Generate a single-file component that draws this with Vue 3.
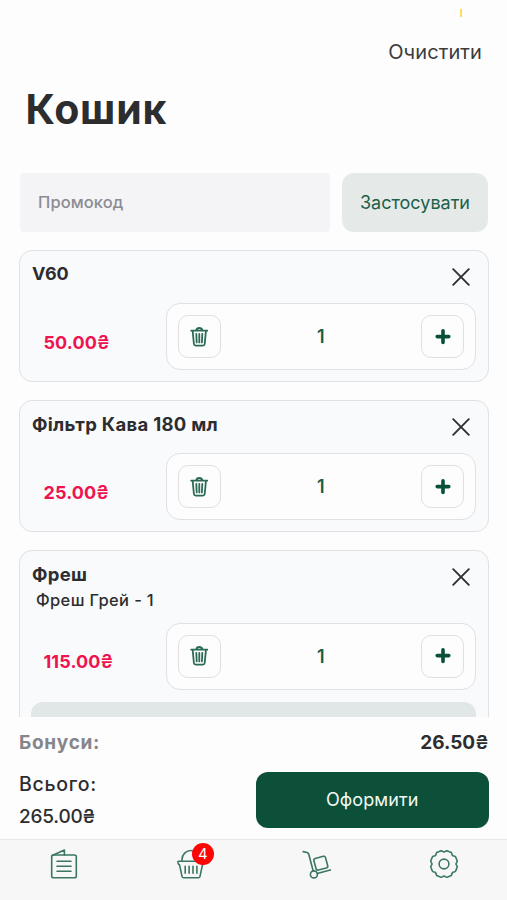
<script setup>
const items = [
  { name: 'V60', price: '50.00', qty: 1 },
  { name: 'Фільтр Кава 180 мл', price: '25.00', qty: 1 },
  { name: 'Фреш', option: 'Фреш Грей - 1', price: '115.00', qty: 1, more: true },
]

// Outline of the settings gear: a circle with eight shallow notches
const gear = (() => {
  const pts = []
  for (let d = 0; d < 360; d += 3) {
    const off = ((d + 22.5) % 45) - 22.5
    const r = 13.9 - 1.9 * Math.exp(-((off / 9) ** 2)) - 0.5 * Math.exp(-(((Math.abs(off) - 22.5) / 8) ** 2))
    const a = (d * Math.PI) / 180
    pts.push(`${(15 + r * Math.sin(a)).toFixed(2)} ${(15 - r * Math.cos(a)).toFixed(2)}`)
  }
  return `M${pts.join('L')}Z`
})()
</script>

<template>
  <div class="screen">
    <header class="top">
      <i class="mark"></i>
      <button class="clear">Очистити</button>
      <h1>Кошик</h1>
    </header>

    <div class="promo">
      <div class="promo-input"><span>Промокод</span></div>
      <button class="apply"><span>Застосувати</span></button>
    </div>

    <main class="list">
      <article v-for="item in items" :key="item.name" class="card">
        <div class="card-head">
          <div>
            <h2 :class="{ digits: item.name === 'V60' }">{{ item.name }}</h2>
            <p v-if="item.option" class="option">{{ item.option }}</p>
          </div>
          <svg class="close" width="18" height="18" viewBox="0 0 18 18">
            <path d="M1.2 1.2 16.8 16.8M16.8 1.2 1.2 16.8" />
          </svg>
        </div>
        <div class="card-row">
          <span class="price">{{ item.price }}<span class="uah">₴</span></span>
          <div class="stepper">
            <button class="step">
              <svg width="18" height="20" viewBox="0 0 18 20">
                <path class="thin" d="M1.2 3.7H17.4M6.2 3.4Q6.7 1 9.3 1T12.4 3.4M2.7 4.3 3.9 17Q4.1 18.6 5.7 18.6H12.9Q14.5 18.6 14.7 17L15.9 4.3M6.3 6.8 6.7 15.4M9.3 6.8V15.4M12.3 6.8 11.9 15.4" />
              </svg>
            </button>
            <span class="qty">{{ item.qty }}</span>
            <button class="step">
              <svg width="16" height="16" viewBox="0 0 16 16">
                <path class="plus" d="M8 1.8V13.4M2.2 7.6H13.8" />
              </svg>
            </button>
          </div>
        </div>
        <div v-if="item.more" class="more"></div>
      </article>
    </main>

    <section class="summary">
      <div class="bonus">
        <span class="bonus-label">Бонуси:</span>
        <span class="bonus-value">26.50<span class="uah">₴</span></span>
      </div>
      <div class="checkout">
        <div class="total">
          <span class="total-label">Всього:</span>
          <span class="total-value">265.00₴</span>
        </div>
        <button class="order"><span>Оформити</span></button>
      </div>
    </section>

    <nav class="tabs">
      <a>
        <svg width="30" height="32" viewBox="0 0 30 32">
          <rect x="2.7" y="7" width="24.6" height="22.8" rx="1.8" />
          <path d="M3.2 7.6 15.4 2V7M8 13.2H22M8 18.2H22M8 23.2H22" />
        </svg>
      </a>
      <a>
        <span class="basket">
          <svg width="30" height="32" viewBox="0 0 30 32">
            <path d="M6 13V11.5A9 9 0 0 1 24 11.5V13M2.6 13.3H27.4Q28.2 13.3 28.1 14.2L27.6 15.9Q27.3 16.7 26.5 16.7L24 28.3Q23.7 29.8 22.3 29.8H7.7Q6.3 29.8 6 28.3L3.5 16.7Q2.7 16.7 2.4 15.9L1.9 14.2Q1.8 13.3 2.6 13.3ZM9.2 18.3V25.3M13.1 18.3V25.3M17 18.3V25.3M20.9 18.3V25.3" />
          </svg>
          <b class="badge">4</b>
        </span>
      </a>
      <a>
        <svg width="30" height="32" viewBox="0 0 30 32">
          <path d="M1.2 3.6 5 4.5Q6.3 4.9 6.7 6L11.2 23M15.2 25.6 28.3 21.9" />
          <circle cx="11.9" cy="26.4" r="3.5" />
          <rect x="12.8" y="9.2" width="12" height="12" rx="1.8" transform="rotate(-15 18.8 15.2)" />
        </svg>
      </a>
      <a>
        <svg class="gear" width="30" height="30" viewBox="0 0 30 30">
          <path :d="gear" />
          <circle cx="15" cy="15" r="4.9" />
        </svg>
      </a>
    </nav>
  </div>
</template>

<style>
body { background: #fdfdfd; }
</style>

<style scoped>
.screen {
  width: 507px;
  height: 900px;
  display: flex;
  flex-direction: column;
  overflow: hidden;
  background: #fdfdfd;
  color: #2d2d2f;
  font-family: Inter, sans-serif;
}
button { border: 0; padding: 0; background: none; font-family: inherit; }
h1, h2, p { margin: 0; }
svg { display: block; fill: none; }
.top { position: relative; height: 173px; flex: none; display: flex; flex-direction: column; }
.mark { position: absolute; left: 460px; top: 9px; width: 2px; height: 8px; background: #fbdc5c; }
.clear { align-self: flex-end; margin: 40px 25px 0 0; height: 24px; font-size: 20px; line-height: 24px; letter-spacing: .1px; color: #3b3b3d; }
h1 { margin: 21px 0 0 25.5px; font-size: 41px; line-height: 48px; font-weight: 700; letter-spacing: .8px; white-space: nowrap; }
.promo { flex: none; display: flex; gap: 12px; height: 59px; padding: 0 19px 0 20px; }
.promo-input { width: 310px; display: flex; align-items: center; padding: 0 0 1px 18px; box-sizing: border-box; border-radius: 4px; background: #f4f4f6; color: #8b8b92; font-size: 16.5px; font-weight: 500; letter-spacing: .1px; }
.apply { flex: 1; border-radius: 12px; background: #e5eae8; color: #1b6048; font-size: 18px; }
.list { height: 467px; margin-top: 18px; flex: none; overflow: hidden; display: flex; flex-direction: column; gap: 18px; padding: 0 18px 0 19px; }
.card { flex: none; box-sizing: border-box; min-height: 132px; padding: 11px 12px 11px 11px; border: 1.5px solid #dfe1e4; border-radius: 13px; background: #f9fafc; }
.card + .card { margin-top: .2px; }
.card-head { display: flex; justify-content: space-between; min-height: 41px; }
h2 { font-size: 18.5px; line-height: 24px; font-weight: 700; letter-spacing: .3px; white-space: nowrap; padding-left: 1px; }
h2.digits { font-size: 18px; letter-spacing: -.1px; }
.option { padding: 2px 0 10.6px 5px; font-size: 16.5px; line-height: 24px; font-weight: 500; letter-spacing: .35px; white-space: nowrap; }
.close { margin: 6px 6px 0 0; stroke: #303032; stroke-width: 1.9; stroke-linecap: round; }
.card-row { display: flex; justify-content: space-between; align-items: center; }
.price { padding: 12px 0 0 12.5px; font-size: 18px; line-height: 24px; font-weight: 700; letter-spacing: .1px; color: #ee1450; }
.uah { font-weight: 600; }
.stepper { width: 310px; height: 67px; box-sizing: border-box; display: flex; align-items: center; justify-content: space-between; padding: 0 11px 0 10.5px; border: 1.5px solid #dfe1e4; border-radius: 14px; background: #fdfdfd; }
.step { width: 43px; height: 43px; display: flex; align-items: center; justify-content: center; border: 1.5px solid #e0e0e4; border-radius: 10px; }
.thin { stroke: #2b6b56; stroke-width: 1.8; stroke-linecap: round; }
.plus { stroke: #075138; stroke-width: 3.6; stroke-linecap: round; }
.qty { color: #1b6048; font-size: 18px; font-weight: 600; }
.more { height: 60px; margin: 12px 0 0; border-radius: 12px; background: #e1e7e6; }
.summary { height: 122px; flex: none; box-sizing: border-box; padding: 12.5px 18.5px 0 19px; }
.bonus { display: flex; justify-content: space-between; font-size: 19px; line-height: 26px; font-weight: 700; }
.bonus-label { color: #85858c; letter-spacing: .7px; }
.checkout { display: flex; justify-content: space-between; padding-top: 16px; }
.total { display: flex; flex-direction: column; gap: 9px; padding-top: .5px; font-size: 19px; line-height: 24px; font-weight: 500; }
.total-label { font-size: 19.5px; letter-spacing: .7px; }
.total-value { letter-spacing: -.2px; }
.order { width: 232.5px; height: 56.5px; border-radius: 12px; background: #0d5039; color: #f3f8f5; font-size: 18px; letter-spacing: .1px; }
.tabs { flex: 1; display: grid; grid-template-columns: repeat(4, 1fr); justify-items: center; align-items: start; border-top: 1.5px solid #e7e7e7; padding: 8px 0 0 1px; background: #f7f7f7; }
.tabs svg { stroke: #3b7662; stroke-width: 1.6; stroke-linecap: round; stroke-linejoin: round; }
.tabs .gear { margin-top: 1px; }
.basket { position: relative; display: block; }
.badge { position: absolute; left: 16px; top: -5px; width: 22px; height: 22px; border-radius: 50%; background: #fb0505; color: #fff; font-size: 15px; line-height: 22px; font-weight: 400; text-align: center; }
</style>
